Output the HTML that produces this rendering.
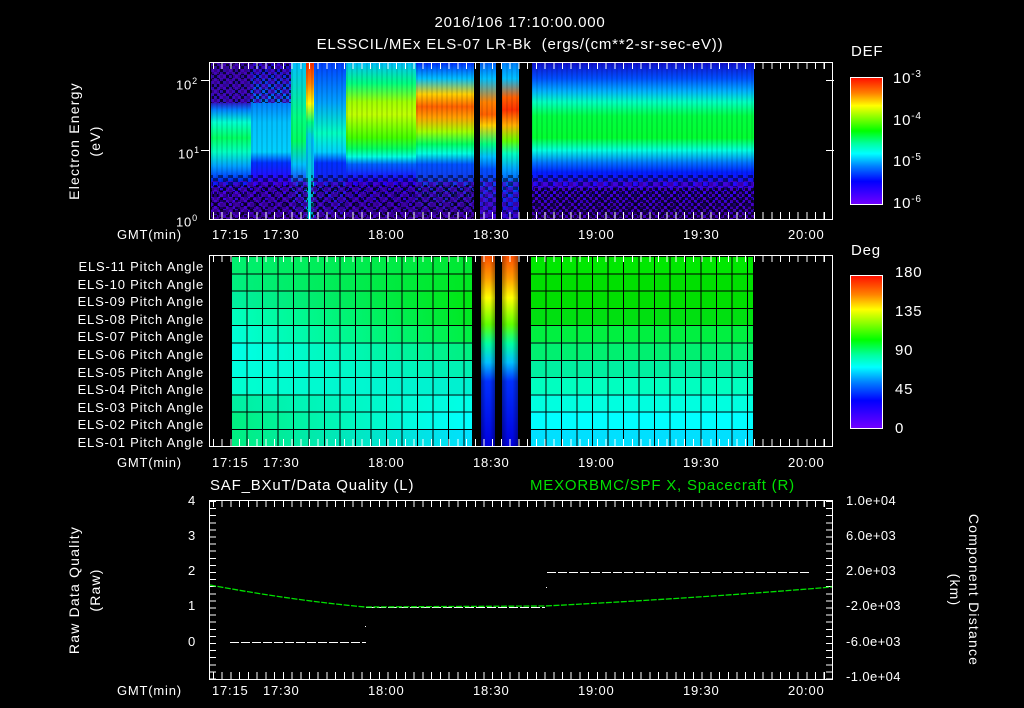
<!DOCTYPE html>
<html><head><meta charset="utf-8"><style>
body{margin:0;background:#000;width:1024px;height:708px;overflow:hidden;position:relative;font-family:"Liberation Sans",sans-serif;color:#fff}
.a{position:absolute}
.t{position:absolute;font-size:13px;white-space:nowrap;letter-spacing:0.8px;line-height:14px}
.fr{position:absolute;border:1px solid #fff;box-sizing:border-box}
.seg{position:absolute;top:0;height:100%}
.spk{position:absolute;background:repeating-conic-gradient(rgba(0,0,0,.7) 0 25%,transparent 0 50%) 0 0/6px 6px}
.spk2{position:absolute;background:repeating-conic-gradient(transparent 0 25%,rgba(0,0,0,.5) 0 50%) 2px 3px/10px 8px}
.spk3{position:absolute;background:repeating-conic-gradient(rgba(80,0,200,.6) 0 25%,transparent 0 50%) 1px 1px/14px 10px}
.vs{position:absolute;inset:0;background:repeating-linear-gradient(to right,rgba(0,0,0,.10) 0 2px,transparent 2px 5px)}
.tk{position:absolute;height:7px;background:repeating-linear-gradient(to right,#fff 0 1px,transparent 1px 8.725px)}
.cb{position:absolute;border:1px solid #fff;box-sizing:border-box;background:linear-gradient(#ff1000,#ff8000 12%,#ffff00 22%,#80ff00 32%,#00ff00 42%,#00ffa0 52%,#00ffff 60%,#0080ff 70%,#0000ff 82%,#7000ff)}
.rot{position:absolute;transform:rotate(-90deg);transform-origin:center;text-align:center;white-space:nowrap;font-size:14px;letter-spacing:1.2px}
.rotr{position:absolute;transform:rotate(90deg);transform-origin:center;text-align:center;white-space:nowrap;font-size:14px;letter-spacing:1.2px}
.st{position:absolute;top:0;height:190px;background:linear-gradient(#ff5000,#ffa000 12%,#ffff00 22%,#60ff00 36%,#00ffa0 46%,#00c0ff 56%,#0030ff 66%,#0000e0)}
</style></head><body>

<div class="t" style="left:0;width:1040px;text-align:center;top:16px;font-size:15px">2016/106 17:10:00.000</div>
<div class="t" style="left:0;width:1040px;text-align:center;top:38px;font-size:15px">ELSSCIL/MEx ELS-07 LR-Bk &nbsp;(ergs/(cm**2-sr-sec-eV))</div>

<!-- TOP PANEL -->
<div class="a" style="left:211px;top:63px;width:543px;height:156px;overflow:hidden">
 <div class="seg" style="left:0;width:40px;background:linear-gradient(#3008a0,#3010c0 25%,#0080ff 30%,#00ffd0 38%,#00ff60 48%,#00ffc0 57%,#00a0ff 66%,#0020ff 76%,#4000ff 83%,#4000c0)"></div>
 <div class="seg" style="left:40px;width:40px;background:linear-gradient(#2000d0,#0060ff 20%,#00c0ff 38%,#00d0ff 57%,#0030ff 64%,#3000ff 76%,#4000c0)"></div>
 <div class="seg" style="left:80px;width:15px;background:linear-gradient(#00c0ff,#00ff80 35%,#00ff60 50%,#00c0ff 65%,#2030ff 78%,#4000e0)"></div>
 <div class="seg" style="left:95px;width:8px;background:linear-gradient(#ff3000,#ff8000 13%,#ffff00 26%,#00ff80 38%,#00c0ff 50%,#00b0d0)"></div>
 <div class="seg" style="left:103px;width:32px;background:linear-gradient(#0040ff,#00a0ff 25%,#00ffc0 45%,#00d0ff 57%,#0030ff 64%,#4000e0)"></div>
 <div class="seg" style="left:135px;width:70px;background:linear-gradient(#00c0ff,#00ff80 13%,#a0ff00 25%,#c0ff00 33%,#40ff00 48%,#00ff60 55%,#00ffe0 60%,#0060ff 65%,#2000ff 76%,#4000c0)"></div>
 <div class="seg" style="left:205px;width:58px;background:linear-gradient(#0030ff,#00c0ff 10%,#ffd000 20%,#ff6000 28%,#ffa000 35%,#a0ff00 44%,#00ff60 52%,#00ffe0 58%,#0050ff 65%,#4000c0)"></div>
 <div class="seg" style="left:269px;width:16px;background:linear-gradient(#0060ff,#00c0ff 10%,#ff8000 25%,#ff6000 33%,#ffd000 40%,#00ff80 52%,#00c0ff 60%,#0050ff 68%,#4000e0)"></div>
 <div class="seg" style="left:291px;width:17px;background:linear-gradient(#0080ff,#00c0ff 10%,#ff6000 22%,#ff3000 30%,#ffb000 40%,#60ff00 50%,#00ffc0 58%,#00a0ff 68%,#0040ff 80%,#2000e0)"></div>
 <div class="seg" style="left:321px;width:222px;background:linear-gradient(#1010d0,#0050ff 10%,#00b0ff 18%,#00ffc0 25%,#00ff40 34%,#00ff30 48%,#00ffe0 56%,#0070ff 64%,#0020ff 70%,#3000ff 80%,#4000c0)"></div>
 <div class="vs"></div>
 <div class="spk" style="left:0;top:0;width:80px;height:40px"></div>
 <div class="spk3" style="left:0;top:0;width:80px;height:40px"></div>
 <div class="spk" style="left:0;top:122px;width:263px;height:34px"></div>
 <div class="spk2" style="left:0;top:112px;width:543px;height:44px"></div>
 <div class="spk3" style="left:0;top:118px;width:543px;height:38px"></div>
 <div class="spk" style="left:321px;top:125px;width:222px;height:31px"></div>
 <div class="seg" style="left:97px;width:3px;background:#00d0e0;top:70px;height:86px"></div>
 <div class="seg" style="left:263px;width:6px;background:#000"></div>
 <div class="seg" style="left:285px;width:6px;background:#000"></div>
 <div class="seg" style="left:308px;width:13px;background:#000"></div>
 <div class="seg" style="left:543px;width:10px;background:#000"></div>
</div>
<div class="fr" style="left:209px;top:62px;width:624px;height:158px"></div>
<div class="tk" style="left:213px;top:62px;width:618px"></div>
<div class="tk" style="left:213px;top:212px;width:618px"></div>
<div class="a" style="left:201px;top:80px;width:8px;height:1px;background:#fff"></div>
<div class="a" style="left:201px;top:150px;width:8px;height:1px;background:#fff"></div>
<div class="a" style="left:826px;top:80px;width:8px;height:1px;background:#fff"></div>
<div class="a" style="left:826px;top:150px;width:8px;height:1px;background:#fff"></div>
<div class="t" style="left:176px;top:74px">10<sup style="font-size:9px">2</sup></div>
<div class="t" style="left:178px;top:143px">10<sup style="font-size:9px">1</sup></div>
<div class="t" style="left:176px;top:211px">10<sup style="font-size:9px">0</sup></div>
<div class="rot" style="left:-15px;top:132px;width:180px;height:18px">Electron Energy</div>
<div class="rot" style="left:6px;top:132px;width:180px;height:18px">(eV)</div>

<div class="t" style="left:117px;top:228px">GMT(min)</div>
<div class="t" style="left:212px;top:228px">17:15</div><div class="t" style="left:263px;top:228px">17:30</div>
<div class="t" style="left:368px;top:228px">18:00</div><div class="t" style="left:473px;top:228px">18:30</div>
<div class="t" style="left:578px;top:228px">19:00</div><div class="t" style="left:683px;top:228px">19:30</div>
<div class="t" style="left:788px;top:228px">20:00</div>

<div class="t" style="left:851px;top:45px;font-size:15px">DEF</div>
<div class="cb" style="left:850px;top:77px;width:33px;height:128px"></div>
<div class="t" style="left:893px;top:68px;font-size:15px">10<sup style="font-size:10px">-3</sup></div>
<div class="t" style="left:893px;top:110px;font-size:15px">10<sup style="font-size:10px">-4</sup></div>
<div class="t" style="left:893px;top:151px;font-size:15px">10<sup style="font-size:10px">-5</sup></div>
<div class="t" style="left:893px;top:193px;font-size:15px">10<sup style="font-size:10px">-6</sup></div>

<!-- MIDDLE PANEL -->
<div class="a" style="left:231px;top:256px;width:523px;height:190px;overflow:hidden;display:flex;flex-direction:column">
 <div style="flex:1;background:linear-gradient(to right,#00f070,#00e830 241px,#000 241px,#000 300px,#00e800 300px)"></div>
 <div style="flex:1;background:linear-gradient(to right,#00f080,#00e820 241px,#000 241px,#000 300px,#00e000 300px)"></div>
 <div style="flex:1;background:linear-gradient(to right,#00f0a0,#00e810 241px,#000 241px,#000 300px,#00e000 300px)"></div>
 <div style="flex:1;background:linear-gradient(to right,#00ffc0,#00e820 241px,#000 241px,#000 300px,#00e010 300px)"></div>
 <div style="flex:1;background:linear-gradient(to right,#00ffd8,#00f040 241px,#000 241px,#000 300px,#00f040 300px)"></div>
 <div style="flex:1;background:linear-gradient(to right,#00ffe8,#00f080 241px,#000 241px,#000 300px,#00f070 300px)"></div>
 <div style="flex:1;background:linear-gradient(to right,#00ffe0,#00f0b0 241px,#000 241px,#000 300px,#00f0a0 300px)"></div>
 <div style="flex:1;background:linear-gradient(to right,#00ffd0,#00f0d0 241px,#000 241px,#000 300px,#00ffc0 300px)"></div>
 <div style="flex:1;background:linear-gradient(to right,#00f0a0,#00ffe8 241px,#000 241px,#000 300px,#00ffe0 300px)"></div>
 <div style="flex:1;background:linear-gradient(to right,#00f080,#00ffff 241px,#000 241px,#000 300px,#00ffff 300px)"></div>
 <div style="flex:1;background:linear-gradient(to right,#00f080,#00e0ff 241px,#000 241px,#000 300px,#00e0ff 300px)"></div>
 <div class="a" style="left:0;top:0;width:241px;height:190px;background:repeating-linear-gradient(to right,#000 0 1px,transparent 1px 15.5px),repeating-linear-gradient(#000 0 1px,transparent 1px 17.3px)"></div>
 <div class="a" style="left:300px;top:0;width:223px;height:190px;background:repeating-linear-gradient(to right,#000 0 1px,transparent 1px 15.5px) -1px 0,repeating-linear-gradient(#000 0 1px,transparent 1px 17.3px)"></div>
 <div class="st" style="left:250px;width:14px"></div>
 <div class="st" style="left:271px;width:16px"></div>
 <div class="a" style="left:250px;top:0;width:14px;height:190px;background:linear-gradient(to right,rgba(0,0,0,.35),transparent 35%,transparent 65%,rgba(0,0,0,.35))"></div>
 <div class="a" style="left:271px;top:0;width:16px;height:190px;background:linear-gradient(to right,rgba(0,0,0,.35),transparent 35%,transparent 65%,rgba(0,0,0,.35))"></div>
</div>
<div class="fr" style="left:209px;top:255px;width:624px;height:192px"></div>
<div class="tk" style="left:213px;top:255px;width:618px"></div>
<div class="tk" style="left:213px;top:439px;width:618px"></div>
<div class="t" style="left:40px;top:258px;width:164px;text-align:right;line-height:17.6px;font-size:13px">ELS-11 Pitch Angle<br>ELS-10 Pitch Angle<br>ELS-09 Pitch Angle<br>ELS-08 Pitch Angle<br>ELS-07 Pitch Angle<br>ELS-06 Pitch Angle<br>ELS-05 Pitch Angle<br>ELS-04 Pitch Angle<br>ELS-03 Pitch Angle<br>ELS-02 Pitch Angle<br>ELS-01 Pitch Angle</div>

<div class="t" style="left:117px;top:456px">GMT(min)</div>
<div class="t" style="left:212px;top:456px">17:15</div><div class="t" style="left:263px;top:456px">17:30</div>
<div class="t" style="left:368px;top:456px">18:00</div><div class="t" style="left:473px;top:456px">18:30</div>
<div class="t" style="left:578px;top:456px">19:00</div><div class="t" style="left:683px;top:456px">19:30</div>
<div class="t" style="left:788px;top:456px">20:00</div>

<div class="t" style="left:851px;top:244px;font-size:15px">Deg</div>
<div class="cb" style="left:850px;top:275px;width:33px;height:154px"></div>
<div class="t" style="left:895px;top:266px;font-size:15px">180</div>
<div class="t" style="left:895px;top:305px;font-size:15px">135</div>
<div class="t" style="left:895px;top:344px;font-size:15px">90</div>
<div class="t" style="left:895px;top:383px;font-size:15px">45</div>
<div class="t" style="left:895px;top:422px;font-size:15px">0</div>

<!-- BOTTOM PANEL -->
<div class="t" style="left:210px;top:479px;font-size:15px">SAF_BXuT/Data Quality (L)</div>
<div class="t" style="left:530px;top:479px;font-size:15px;color:#00e000">MEXORBMC/SPF X, Spacecraft (R)</div>
<div class="fr" style="left:209px;top:500px;width:624px;height:180px"></div>
<div class="tk" style="left:213px;top:500px;width:618px"></div>
<div class="tk" style="left:213px;top:672px;width:618px"></div>
<div class="a" style="left:210px;top:501px;width:6px;height:178px;background:repeating-linear-gradient(#fff 0 1px,transparent 1px 7.1px)"></div>
<div class="a" style="left:826px;top:501px;width:6px;height:178px;background:repeating-linear-gradient(#fff 0 1px,transparent 1px 7.1px)"></div>
<svg class="a" style="left:0;top:0" width="1024" height="708">
 <g stroke="#fff" stroke-width="1" stroke-dasharray="9 2">
  <line x1="230" y1="642.5" x2="366" y2="642.5"/>
  <line x1="366" y1="607.5" x2="545" y2="607.5"/>
  <line x1="547" y1="572.5" x2="810" y2="572.5"/>
 </g>
 <path d="M210 585 Q290 600 365 607 L545 606 Q700 598 832 587" fill="none" stroke="#00e000" stroke-width="1.3" stroke-dasharray="6 1.5"/>
 <rect x="365" y="626" width="1" height="1" fill="#fff"/><rect x="546" y="587" width="1" height="1" fill="#fff"/>
</svg>
<div class="t" style="left:188px;top:494px">4</div><div class="t" style="left:188px;top:529px">3</div>
<div class="t" style="left:188px;top:564px">2</div><div class="t" style="left:188px;top:599px">1</div>
<div class="t" style="left:188px;top:635px">0</div>
<div class="t" style="left:846px;top:494px;letter-spacing:0.4px">1.0e+04</div>
<div class="t" style="left:846px;top:529px;letter-spacing:0.4px">6.0e+03</div>
<div class="t" style="left:846px;top:564px;letter-spacing:0.4px">2.0e+03</div>
<div class="t" style="left:846px;top:599px;letter-spacing:0.4px">-2.0e+03</div>
<div class="t" style="left:846px;top:635px;letter-spacing:0.4px">-6.0e+03</div>
<div class="t" style="left:846px;top:670px;letter-spacing:0.4px">-1.0e+04</div>
<div class="rot" style="left:-15px;top:581px;width:180px;height:18px">Raw Data Quality</div>
<div class="rot" style="left:6px;top:581px;width:180px;height:18px">(Raw)</div>
<div class="rotr" style="left:883px;top:581px;width:180px;height:18px">Component Distance</div>
<div class="rotr" style="left:864px;top:581px;width:180px;height:18px">(km)</div>

<div class="t" style="left:117px;top:684px">GMT(min)</div>
<div class="t" style="left:212px;top:684px">17:15</div><div class="t" style="left:263px;top:684px">17:30</div>
<div class="t" style="left:368px;top:684px">18:00</div><div class="t" style="left:473px;top:684px">18:30</div>
<div class="t" style="left:578px;top:684px">19:00</div><div class="t" style="left:683px;top:684px">19:30</div>
<div class="t" style="left:788px;top:684px">20:00</div>
</body></html>
